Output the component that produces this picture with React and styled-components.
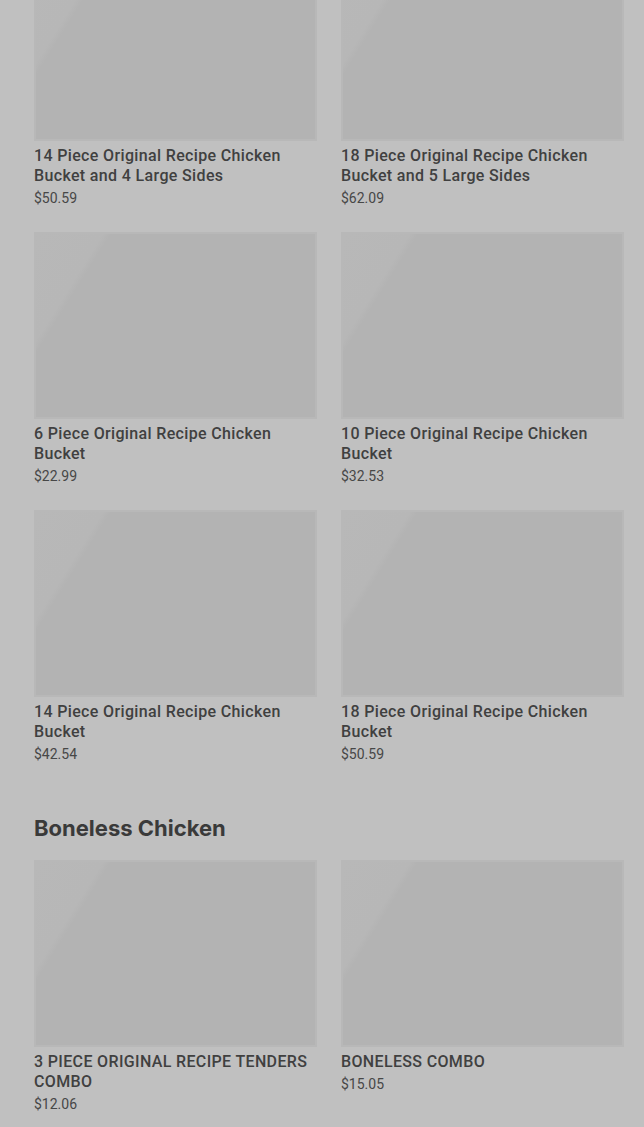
import React from "react";
import styled, { createGlobalStyle } from "styled-components";

const Global = createGlobalStyle`
  html, body { margin: 0; padding: 0; background: #c0c0c0; }
  body { font-family: Roboto, "Liberation Sans", sans-serif; overflow: hidden; }
`;

const Page = styled.div`
  width: 644px;
  height: 1127px;
  overflow: hidden;
  background: #c0c0c0;
  padding: 0 20px 0 34px;
  box-sizing: border-box;
`;

const Section = styled.section`
  margin-top: ${(p) => p.$offset || 0}px;
`;

const Heading = styled.h2`
  margin: 0 0 17px;
  padding-top: 50px;
  font-family: Inter, "Noto Sans", sans-serif;
  font-weight: 700;
  font-size: 22px;
  line-height: 30px;
  color: #3a3a3a;
`;

const Grid = styled.div`
  display: grid;
  grid-template-columns: 283px 283px;
  column-gap: 24px;
  row-gap: 25px;
`;

const Card = styled.div`
  display: flex;
  flex-direction: column;
`;

const Thumb = styled.div`
  height: 187px;
  box-sizing: border-box;
  border: 2px solid #b8b8b8;
  background: linear-gradient(
    122deg,
    #b8b8b8 0%,
    #b7b7b7 17%,
    #b3b3b3 19%,
    #b3b3b3 100%
  );
`;

const Title = styled.div`
  margin-top: 5px;
  font-family: Roboto, "Liberation Sans", sans-serif;
  font-weight: 500;
  font-size: 16px;
  line-height: 20px;
  letter-spacing: 0.35px;
  color: #404040;
  padding-right: 4px;
`;

const Price = styled.div`
  margin-top: 3px;
  font-family: Roboto, "Liberation Sans", sans-serif;
  font-size: 14px;
  line-height: 18px;
  color: #474747;
`;

const buckets = [
  ["14 Piece Original Recipe Chicken Bucket and 4 Large Sides", "$50.59"],
  ["18 Piece Original Recipe Chicken Bucket and 5 Large Sides", "$62.09"],
  ["6 Piece Original Recipe Chicken Bucket", "$22.99"],
  ["10 Piece Original Recipe Chicken Bucket", "$32.53"],
  ["14 Piece Original Recipe Chicken Bucket", "$42.54"],
  ["18 Piece Original Recipe Chicken Bucket", "$50.59"],
];

const boneless = [
  ["3 PIECE ORIGINAL RECIPE TENDERS COMBO", "$12.06"],
  ["BONELESS COMBO", "$15.05"],
];

const Item = ({ title, price }) => (
  <Card>
    <Thumb />
    <Title>{title}</Title>
    <Price>{price}</Price>
  </Card>
);

export default function App() {
  return (
    <>
      <Global />
      <Page>
        <Section $offset={-46}>
          <Grid>
            {buckets.map(([t, p], i) => (
              <Item key={i} title={t} price={p} />
            ))}
          </Grid>
        </Section>
        <Section>
          <Heading>Boneless Chicken</Heading>
          <Grid>
            {boneless.map(([t, p], i) => (
              <Item key={i} title={t} price={p} />
            ))}
          </Grid>
        </Section>
      </Page>
    </>
  );
}
